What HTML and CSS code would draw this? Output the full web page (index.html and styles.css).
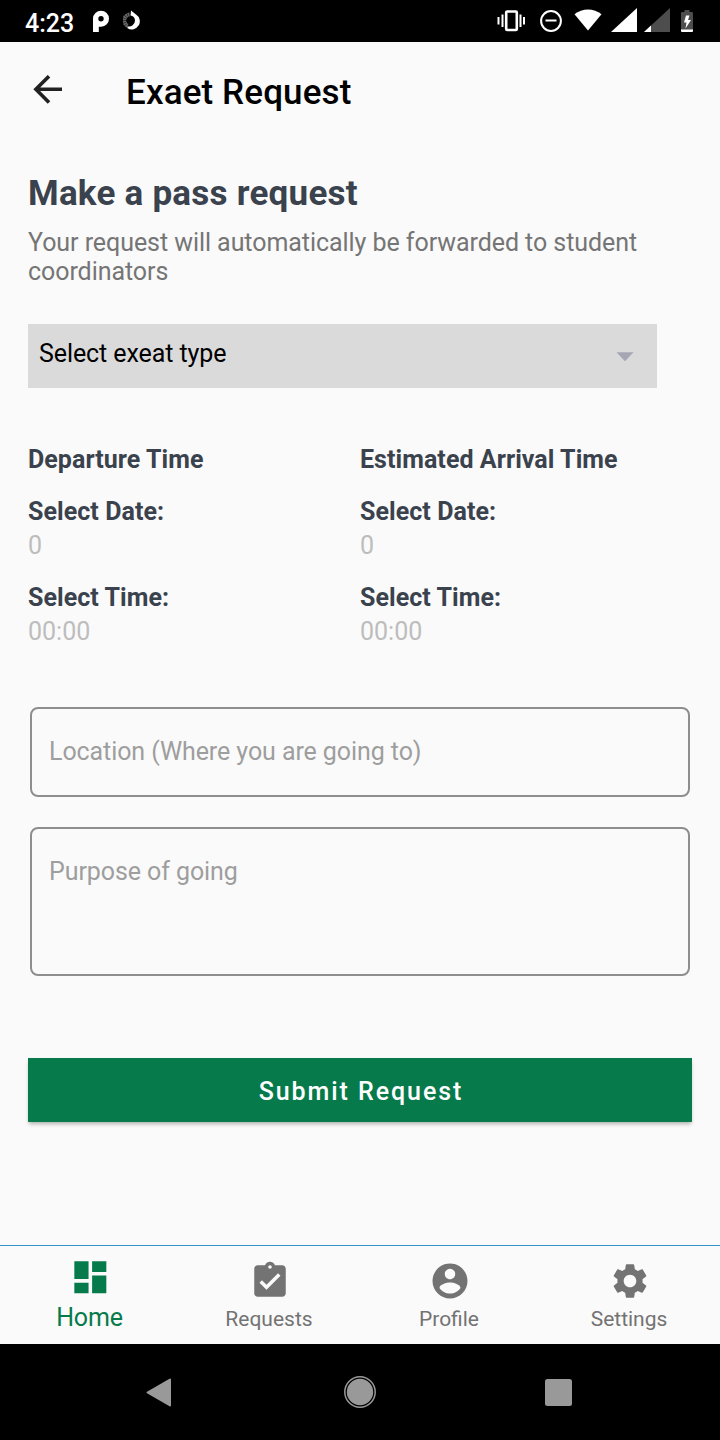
FILE: index.html
```html
<!DOCTYPE html>
<html lang="en">
<head>
<meta charset="utf-8">
<title>Exaet Request</title>
<link rel="stylesheet" href="styles.css">
</head>
<body>
<div class="screen">
  <header class="status">
    <span class="clock">4:23</span>
    <svg class="app-p" width="18" height="22" viewBox="0 0 18 22"><path fill="#fff" fill-rule="evenodd" d="M1 22V8.500A8 8 0 1 1 9.200 16.700H6.800V22ZM9 6A2.700 2.700 0 1 0 9 11.400A2.700 2.700 0 0 0 9 6Z"/></svg>
    <svg class="app-ring" width="18" height="20" viewBox="0 0 18 20"><path d="M6.500 4.500A6 6 0 0 0 5 16" fill="none" stroke="#666" stroke-width="4" stroke-dasharray="1.800 .4"/><path fill="#fff" d="M8 .5L13 4.500A7.500 7.500 0 0 1 4.500 18.200V16.200A6 6 0 0 0 12 10.500C12 7.500 10 6 7.500 5.500Z"/></svg>
    <div class="status-right">
      <svg width="28" height="22" viewBox="0 0 28 22"><g fill="none" stroke="#fff"><rect x="9.200" y="1.500" width="10.600" height="18.500" rx="1" stroke-width="2.600"/><path stroke-width="2" d="M1.500 7V14.500M5.500 4.500V17M23.500 4.500V17M27 7V14.500"/></g></svg>
      <svg class="dnd" width="22" height="22" viewBox="0 0 22 22"><g fill="none" stroke="#fff" stroke-width="2"><circle cx="11" cy="11" r="9.900"/><path d="M5.500 10.500H16.500"/></g></svg>
      <svg class="wifi" width="28" height="22" viewBox="0 0 28 22"><path fill="#fff" d="M.5 5.200C8 -1.200 20 -1.200 27.500 5.200L14 21.500Z"/></svg>
      <svg class="sig" width="26" height="24" viewBox="0 0 26 24"><path fill="#fff" d="M0 24L26 0V24Z"/></svg>
      <svg class="sig2" width="26" height="24" viewBox="0 0 26 24"><path fill="#4d4d4d" d="M0 24L26 0V24Z"/><path fill="#fff" d="M0 24L7 17.500V24Z"/></svg>
      <svg class="bat" width="12" height="22" viewBox="0 0 12 22"><path fill="#4d4d4d" d="M3.500 0H8.500V2H11Q12 2 12 3V20H0V3Q0 2 1 2H3.500Z"/><path fill="#fff" d="M0 19.500H12V21Q12 22 11 22H1Q0 22 0 21ZM5 5.500L3 12.500H5.500L4.500 18.500L10 10H7L8.500 5.500Z"/></svg>
    </div>
  </header>

  <div class="appbar">
    <svg width="30" height="30" viewBox="0 0 30 30"><path fill="none" stroke="#212121" stroke-width="3.600" d="M29 14.300H3M16 1.200L2.900 14.300L16 27.400"/></svg>
    <h1>Exaet Request</h1>
  </div>

  <main>
    <h2>Make a pass request</h2>
    <p class="sub">Your request will automatically be forwarded to student<br>coordinators</p>
    <div class="select"><span>Select exeat type</span><svg width="18" height="10" viewBox="0 0 18 10"><path fill="#a4a6b3" d="M.5 .3H17.500L9 9.200Z"/></svg></div>
    <div class="times">
      <section><h3>Departure Time</h3><h4>Select Date:</h4><p>0</p><h4>Select Time:</h4><p>00:00</p></section>
      <section><h3>Estimated Arrival Time</h3><h4>Select Date:</h4><p>0</p><h4>Select Time:</h4><p>00:00</p></section>
    </div>
    <div class="field">Location (Where you are going to)</div>
    <div class="field area">Purpose of going</div>
    <button class="submit">Submit Request</button>
  </main>

  <nav class="tabs">
    <div class="tab active"><svg width="42.670" height="42.670" viewBox="0 0 24 24"><path d="M3 13h8V3H3v10zm0 8h8v-6H3v6zm10 0h8V11h-8v10zm0-18v6h8V3h-8z"/></svg><span>Home</span></div>
    <div class="tab"><svg width="42" height="42" viewBox="0 0 24 24"><path d="M19 3h-4.180C14.400 1.840 13.300 1 12 1c-1.300 0-2.400.84-2.820 2H5c-1.100 0-2 .9-2 2v14c0 1.100.9 2 2 2h14c1.100 0 2-.9 2-2V5c0-1.100-.9-2-2-2zm-7 0c.55 0 1 .45 1 1s-.45 1-1 1-1-.45-1-1 .45-1 1-1zm-2 14l-4-4 1.410-1.410L10 14.170l6.590-6.590L18 9l-8 8z"/></svg><span>Requests</span></div>
    <div class="tab"><svg width="42" height="42" viewBox="0 0 24 24"><path d="M12 2C6.480 2 2 6.480 2 12s4.480 10 10 10 10-4.480 10-10S17.520 2 12 2zm0 3c1.660 0 3 1.340 3 3s-1.340 3-3 3-3-1.340-3-3 1.340-3 3-3zm0 14.200c-2.500 0-4.710-1.280-6-3.220.03-1.990 4-3.080 6-3.080 1.990 0 5.970 1.090 6 3.080-1.290 1.940-3.500 3.220-6 3.220z"/></svg><span>Profile</span></div>
    <div class="tab"><svg width="42" height="42" viewBox="0 0 24 24"><path d="M19.140 12.940c.04-.3.06-.61.06-.94 0-.32-.02-.64-.07-.94l2.030-1.580c.18-.14.23-.41.12-.61l-1.920-3.320c-.12-.22-.37-.29-.59-.22l-2.390.96c-.5-.38-1.030-.7-1.620-.94L14.400 2.810c-.04-.24-.24-.41-.48-.41h-3.840c-.24 0-.43.17-.47.41L9.250 5.350c-.59.24-1.130.57-1.620.94l-2.390-.96c-.22-.08-.47 0-.59.22L2.740 8.870c-.12.21-.08.47.12.61l2.030 1.580c-.05.3-.09.63-.09.94s.02.64.07.94l-2.030 1.580c-.18.14-.23.41-.12.61l1.920 3.320c.12.22.37.29.59.22l2.390-.96c.5.38 1.030.7 1.620.94l.36 2.540c.05.24.24.41.48.41h3.840c.24 0 .44-.17.47-.41l.36-2.540c.59-.24 1.130-.56 1.620-.94l2.390.96c.22.08.47 0 .59-.22l1.920-3.320c.12-.22.07-.47-.12-.61l-2.010-1.580zM12 15.600c-1.980 0-3.600-1.620-3.600-3.600s1.620-3.600 3.600-3.600 3.600 1.620 3.600 3.600-1.620 3.600-3.600 3.600z"/></svg><span>Settings</span></div>
  </nav>

  <footer class="sysnav">
    <svg width="26" height="30" viewBox="0 0 26 30"><path fill="#999" stroke="#999" stroke-width="2" stroke-linejoin="round" d="M1.500 15.500L24 2.500V28.500Z"/></svg>
    <svg class="home-key" width="32" height="32" viewBox="0 0 32 32"><circle cx="16" cy="16" r="13.200" fill="#999"/><circle cx="16" cy="16" r="15.200" fill="none" stroke="#999" stroke-width="1.500"/></svg>
    <svg width="27" height="27" viewBox="0 0 27 27"><rect width="27" height="27" rx="2.500" fill="#999"/></svg>
  </footer>
</div>
</body>
</html>
```
FILE: styles.css
```css
* { box-sizing: border-box; margin: 0; padding: 0; }
body { font-family: Roboto, sans-serif; background: #fafafa; }
svg { display: block; flex: none; }
.screen { width: 720px; height: 1440px; display: flex; flex-direction: column; background: #fafafa; overflow: hidden; }
.status { height: 42px; background: #000; display: flex; align-items: flex-start; color: #fff; padding: 10px 27px 0 25px; }
.clock { width: 67px; padding-top: 1px; font-size: 25px; line-height: 25px; font-weight: 500; }
.app-ring { margin-left: 13px; }
.status-right { margin-left: auto; display: flex; }
.dnd { margin-left: 15px; }
.wifi { margin-left: 12px; margin-right: 1px; margin-top: -1px; }
.sig { margin-left: 8px; margin-top: -2px; }
.sig2 { margin-left: 7px; margin-top: -2px; }
.bat { margin-left: 11px; }
.appbar { height: 112px; padding: 33px 0 0 33px; display: flex; }
.appbar h1 { margin-left: 63px; margin-top: -3px; font-size: 35px; line-height: 41px; font-weight: 500; letter-spacing: .13px; color: #000; }
main { flex: 1; padding: 19px 28px 0; display: flex; flex-direction: column; }
h2 { font-size: 35px; line-height: 42px; letter-spacing: .24px; color: #3a424d; font-weight: 700; }
.sub { margin-top: 13px; font-size: 25px; line-height: 29px; letter-spacing: -.06px; color: #757575; white-space: nowrap; }
.select { margin-top: 38px; width: 629px; height: 64px; background: #dadada; display: flex; justify-content: space-between; align-items: center; padding: 0 23px 0 11px; color: #000; font-size: 25px; letter-spacing: -.09px; }
.select span { margin-top: -5px; }
.select svg { margin-top: 2px; }
.times { margin-top: 56px; display: grid; grid-template-columns: 1fr 1fr; font-size: 25px; line-height: 32px; }
.times h3, .times h4 { font-size: 25px; font-weight: 700; letter-spacing: .06px; color: #3a424d; }
.times h3 { margin-bottom: 20px; }
.times p { margin-top: 2px; color: #bdbdbd; }
.times p + h4 { margin-top: 20px; }
.field { margin: 59px 2px 0; height: 90px; border: 2px solid #8e8e8e; border-radius: 8px; padding: 27px 17px 0; font-size: 25px; line-height: 32px; letter-spacing: -.08px; color: #9e9e9e; }
.field.area { margin-top: 30px; height: 149px; }
.submit { margin-top: 82px; height: 64px; border: 0; background: #067a4b; color: #fff; font-family: inherit; font-size: 25px; font-weight: 500; letter-spacing: 1.93px; padding: 3px 0 0 2px; box-shadow: 0 3px 4px -1px rgba(0,0,0,.3); }
.tabs { height: 99px; border-top: 1px solid #2f95cb; display: grid; grid-template-columns: repeat(4, 1fr); }
.tab { display: flex; flex-direction: column; align-items: center; padding-top: 14px; color: #737373; font-size: 21px; line-height: 26px; }
.tab svg { fill: currentColor; }
.tab span { margin-top: 4px; padding-right: 2px; }
.active { padding-top: 10px; color: #067a4b; font-size: 25px; letter-spacing: -.15px; }
.active span { margin-top: 6px; padding-right: 1px; }
.sysnav { height: 96px; background: #000; display: flex; align-items: center; justify-content: space-between; padding: 0 148px 0 146px; }
.home-key { margin: 0 -1px 0 1px; }
```
